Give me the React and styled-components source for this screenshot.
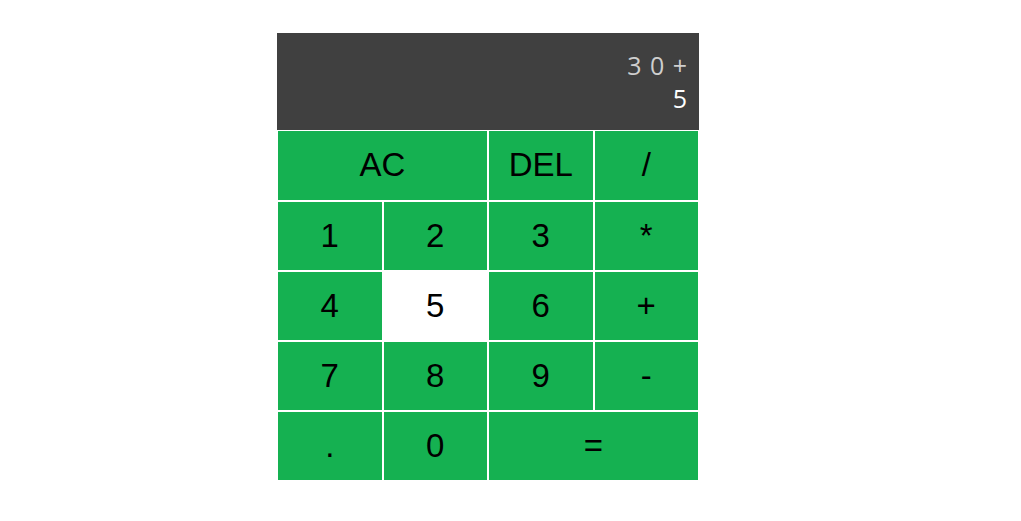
import React from "react";
import styled, { createGlobalStyle } from "styled-components";

const GlobalStyle = createGlobalStyle`
  *, *::before, *::after {
    box-sizing: border-box;
  }
  body {
    margin: 0;
    background: #fff;
    font-family: "Liberation Sans", Arial, sans-serif;
  }
`;

const Page = styled.div`
  padding: 33px 0 0 277px;
`;

const Grid = styled.div`
  display: grid;
  grid-template-columns: repeat(4, 105.5px);
  grid-template-rows: 97.4px repeat(5, 70.2px);
`;

const Output = styled.div`
  grid-column: 1 / -1;
  background-color: #404040;
  display: flex;
  flex-direction: column;
  align-items: flex-end;
  justify-content: center;
  padding: 10px 12px;
  font-family: "Open Sans", "Noto Sans", sans-serif;
  font-size: 25px;
  line-height: 33px;
`;

const Previous = styled.div`
  color: rgba(255, 255, 255, 0.75);
  white-space: pre;
  word-spacing: 2px;
`;

const Current = styled.div`
  color: #fff;
`;

const Key = styled.button`
  grid-column: span ${(p) => p.$span || 1};
  border: 1px solid #fff;
  background-color: ${(p) => (p.$active ? "#fff" : "#15b151")};
  color: #000;
  font-family: "Liberation Sans", Arial, sans-serif;
  font-size: 33px;
  padding: 0;
  outline: none;
  cursor: pointer;
`;

const keys = [
  { label: "AC", span: 2 },
  { label: "DEL" },
  { label: "/" },
  { label: "1" },
  { label: "2" },
  { label: "3" },
  { label: "*" },
  { label: "4" },
  { label: "5", active: true },
  { label: "6" },
  { label: "+" },
  { label: "7" },
  { label: "8" },
  { label: "9" },
  { label: "-" },
  { label: "." },
  { label: "0" },
  { label: "=", span: 2 },
];

const App = () => {
  return (
    <Page>
      <GlobalStyle />
      <Grid>
        <Output>
          <Previous>3 0 +</Previous>
          <Current>5</Current>
        </Output>
        {keys.map((k) => (
          <Key key={k.label} $span={k.span} $active={k.active}>
            {k.label}
          </Key>
        ))}
      </Grid>
    </Page>
  );
};

export default App;
